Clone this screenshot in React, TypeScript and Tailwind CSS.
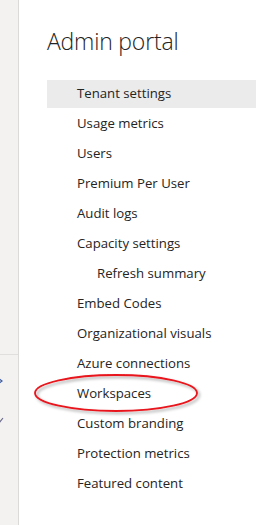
import type { FC, ReactElement } from "react";

const items: { label: string; indent?: boolean; active?: boolean }[] = [
  { label: "Tenant settings", active: true },
  { label: "Usage metrics" },
  { label: "Users" },
  { label: "Premium Per User" },
  { label: "Audit logs" },
  { label: "Capacity settings" },
  { label: "Refresh summary", indent: true },
  { label: "Embed Codes" },
  { label: "Organizational visuals" },
  { label: "Azure connections" },
  { label: "Workspaces" },
  { label: "Custom branding" },
  { label: "Protection metrics" },
  { label: "Featured content" },
];

const App: FC = (): ReactElement => {
  return (
    <div className="relative flex h-[525px] w-[256px] overflow-hidden bg-white font-['Open_Sans',sans-serif] text-[#252423]">
      {/* collapsed left nav */}
      <div className="relative h-full w-[19px] shrink-0 border-r border-[#dcdad8] bg-[#f3f2f1]">
        <div className="absolute left-0 top-[354px] h-px w-[18px] bg-[#e1dfdd]" />
        <svg className="absolute left-[-4px] top-[377px]" width="8" height="8" viewBox="0 0 8 8">
          <path d="M2 1 L6 4 L2 7" fill="none" stroke="#3b5ba5" strokeWidth="1.2" />
        </svg>
        <svg className="absolute left-[-4px] top-[416px]" width="8" height="8" viewBox="0 0 8 8">
          <path d="M1 6 L3 7 L7 2" fill="none" stroke="#6b6a8a" strokeWidth="1.2" />
        </svg>
      </div>

      <div className="flex flex-1 flex-col pl-[28px]">
        <h1 className="mt-[25px] text-[23px] font-light leading-[32px] tracking-[-0.2px] text-[#252423]">
          Admin portal
        </h1>
        <nav className="mt-[23px] flex flex-col gap-[2px]">
          {items.map((it) => (
            <div
              key={it.label}
              className={
                "flex h-[28px] items-center text-[13.2px] " +
                (it.indent ? "pl-[50px] " : "pl-[30px] ") +
                (it.active ? "bg-[#ebebeb]" : "")
              }
            >
              {it.label}
            </div>
          ))}
        </nav>
      </div>

      {/* red ellipse annotation */}
      <svg className="pointer-events-none absolute left-[30px] top-[370px]" width="175" height="48" viewBox="0 0 175 48">
        <defs>
          <filter id="sh" x="-10%" y="-20%" width="130%" height="160%">
            <feDropShadow dx="2" dy="2" stdDeviation="1.5" floodColor="#000" floodOpacity="0.35" />
          </filter>
        </defs>
        <ellipse cx="86" cy="23" rx="81" ry="18" fill="none" stroke="#e8141b" strokeWidth="1.8" filter="url(#sh)" />
      </svg>
    </div>
  );
};

export default App;
